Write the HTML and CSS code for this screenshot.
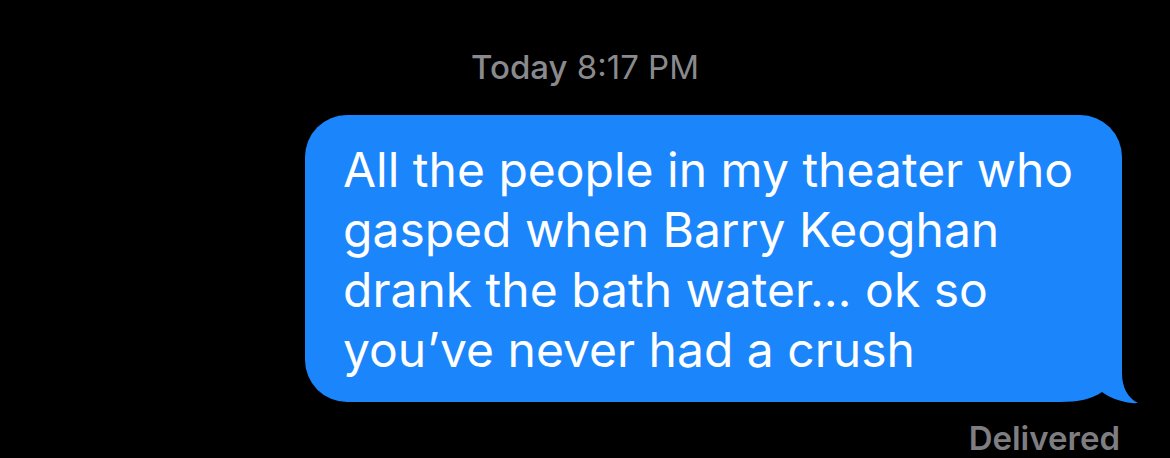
FILE: index.html
```html
<!DOCTYPE html>
<html lang="en">

<head>
    <meta charset="UTF-8">
    <meta name="viewport" content="width=device-width, initial-scale=1.0">
    <title>Messages</title>
    <link rel="stylesheet" href="styles.css">
</head>

<body>
    <div class="thread">
        <p class="stamp"><b>Today</b> 8:17 PM</p>
        <div class="row">
            <div class="bubble">
                <p>All the people in my theater who<br>gasped when Barry Keoghan<br>drank the bath water… ok so<br>you’ve never had a crush</p>
                <!-- tail -->
                <svg class="tail" width="80" height="54" viewBox="0 0 80 54">
                    <rect width="80" height="54" fill="#000"/>
                    <path d="M0,0 H62 V23 C62,38 68,48 78,53 C70,54 52,50 42,42 C32,49 18,52 0,52 Z" fill="#1b85fc"/>
                </svg>
            </div>
        </div>
        <p class="status">Delivered</p>
    </div>
</body>

</html>
```

FILE: styles.css
```css
* {
    margin: 0;
    padding: 0;
}

body {
    background-color: #000;
    font-family: Inter, "Noto Sans", sans-serif;
}

.thread {
    display: flex;
    flex-direction: column;
    padding-top: 47px;
}

.stamp {
    text-align: center;
    color: #8a8a8e;
    font-size: 33px;
    line-height: 40px;
    font-weight: 400;
}

.stamp b {
    font-weight: 500;
}

.row {
    display: flex;
    justify-content: flex-end;
    padding-right: 48px;
    margin-top: 28px;
}

.bubble {
    width: 817px;
    box-sizing: border-box;
    padding: 25px 20px 22px 38px;
    background-color: #1b85fc;
    border-radius: 42px;
    border-bottom-right-radius: 0;
    position: relative;
    color: #fff;
    font-size: 48px;
    line-height: 60px;
    white-space: nowrap;
}

.tail {
    position: absolute;
    right: -18px;
    bottom: -2px;
    display: block;
}

.status {
    align-self: flex-end;
    margin-right: 50px;
    margin-top: 18px;
    color: #7e7e82;
    font-size: 33px;
    font-weight: 600;
    line-height: 36px;
}
```
